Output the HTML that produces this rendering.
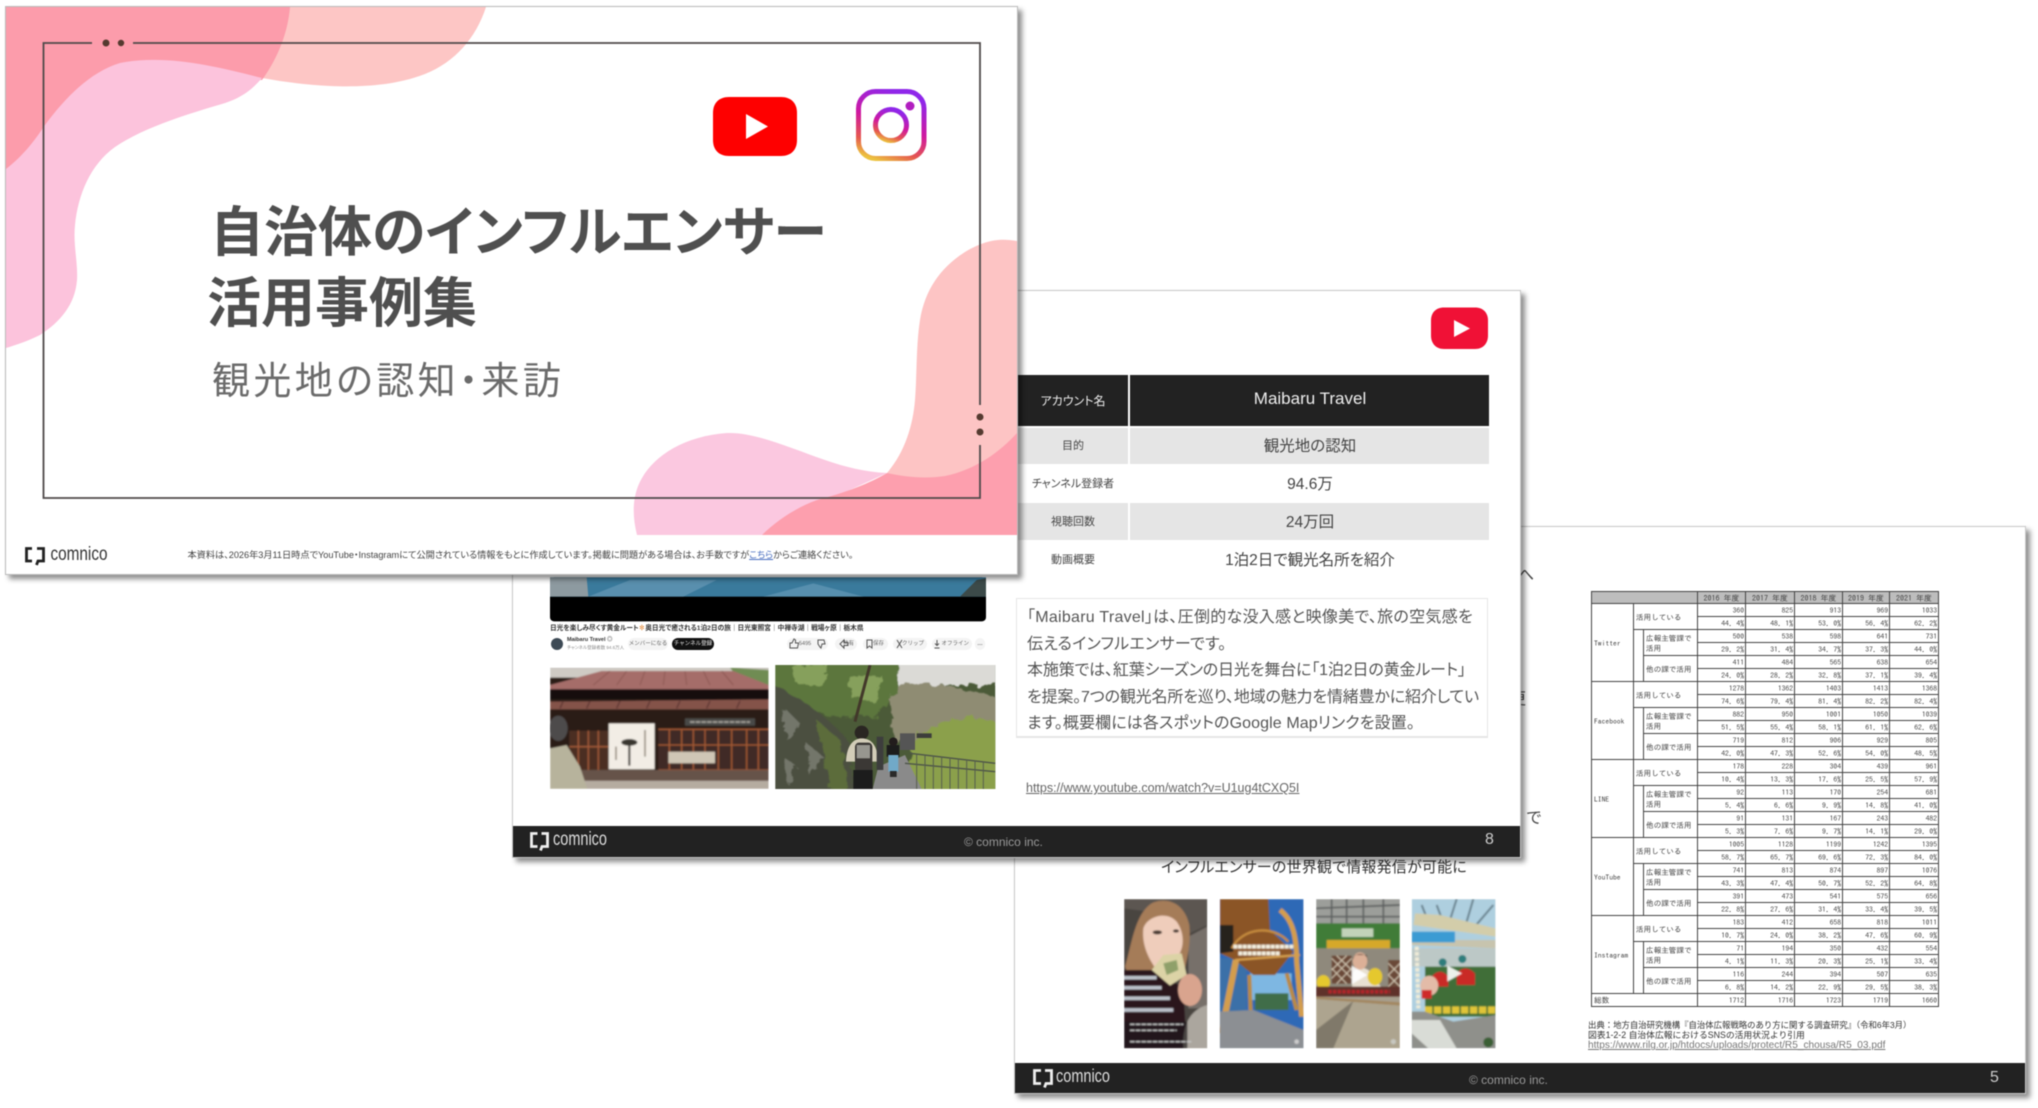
<!DOCTYPE html>
<html lang="ja"><head><meta charset="utf-8"><title>自治体のインフルエンサー活用事例集</title>
<style>
html,body{margin:0;padding:0;background:#fff}
body{position:relative;width:2038px;height:1108px;overflow:hidden;font-family:"Liberation Sans","Noto Sans CJK JP",sans-serif;color:#444}
#w{position:absolute;left:0;top:0;width:2038px;height:1108px;overflow:hidden;filter:blur(.4px)}
.a{position:absolute;white-space:nowrap}
.s{position:absolute;background:#fff;box-sizing:border-box;border:1px solid #c8c8c8;box-shadow:4px 4px 5px rgba(0,0,0,.45)}
.f{position:absolute;background:#222}
.p{font-feature-settings:"palt";}
svg{position:absolute;left:0;top:0}
table{position:absolute;left:1591px;top:591px;width:347px;border-collapse:collapse;table-layout:fixed;font-family:"IPAGothic","Liberation Mono",monospace;font-size:7.6px;color:#444}
td{border:1px solid #444;height:12px;padding:0 1px;text-align:right;line-height:10px;overflow:hidden;white-space:nowrap}
td.l{text-align:left;padding-left:2px}
td.g{background:#fff}
tr.h td{background:#bdbdbd;text-align:center;height:11px;font-size:8px}
.pl{position:absolute;top:638px;height:12px;background:#f4f4f4;border-radius:6px;font-size:5.5px;line-height:12px;text-align:center;color:#666;white-space:nowrap}
.lb{position:absolute;left:1020px;width:106px;text-align:center;font-size:11px;color:#444;white-space:nowrap}
.vl{position:absolute;left:1131px;width:358px;text-align:center;font-size:15.5px;color:#444;white-space:nowrap}
</style></head><body><div id="w">

<!-- Slide 3 -->
<div class="s" style="left:1014px;top:526px;width:1012px;height:568px"></div>
<div class="a" style="left:1518px;top:561px;font-size:16px;color:#444">へ</div>
<div class="a" style="left:1510px;top:685px;font-size:16px;color:#444">更</div>
<div class="a" style="left:1526px;top:804px;font-size:16px;color:#444">で</div>
<div class="a p" style="left:1161px;top:858px;font-size:15px;line-height:20px;color:#333;letter-spacing:.2px">インフルエンサーの世界観で情報発信が可能に</div>

<svg width="2038" height="1108" viewBox="0 0 2038 1108">
<defs>
<filter id="b1" x="-5%" y="-5%" width="110%" height="110%"><feGaussianBlur stdDeviation="2"/></filter>
<filter id="b3" x="-5%" y="-5%" width="110%" height="110%"><feGaussianBlur stdDeviation=".6"/></filter>
<filter id="org" x="-5%" y="-5%" width="110%" height="110%"><feTurbulence type="fractalNoise" baseFrequency=".035" numOctaves="3" seed="4"/><feDisplacementMap in="SourceGraphic" scale="34"/><feGaussianBlur stdDeviation="1.200"/></filter>
<clipPath id="t1"><rect x="12" y="12" width="250" height="448"/></clipPath>
<clipPath id="t2"><rect x="299" y="12" width="252" height="448"/></clipPath>
<clipPath id="t3"><rect x="588" y="12" width="252" height="448"/></clipPath>
<clipPath id="t4"><rect x="875" y="12" width="252" height="448"/></clipPath>
<clipPath id="p1"><rect x="60" y="293" width="656" height="364"/></clipPath>
<clipPath id="p2"><rect x="736" y="285" width="660" height="372"/></clipPath>
</defs>
<g transform="translate(1120 895) scale(.33333)">
<!-- thumb 1 -->
<g clip-path="url(#t1)"><g filter="url(#b1)">
<rect x="12" y="12" width="250" height="448" fill="#4a4441"/>
<path d="M12 12H262V90L200 120L160 60L12 40Z" fill="#5c5651"/>
<path d="M205 125L262 95V340H205Z" fill="#77706a"/>
<path d="M15 215C35 150 45 50 100 22C150 5 195 30 208 90C212 140 205 175 195 220L150 280H40Z" fill="#a57c58"/>
<path d="M70 100C80 65 140 45 170 80C195 115 195 165 165 195L110 225C85 190 65 150 70 100Z" fill="#efcdbb"/>
<ellipse cx="112" cy="112" rx="14" ry="6" fill="#4a3a32"/><ellipse cx="168" cy="108" rx="9" ry="5" fill="#4a3a32"/>
<path d="M12 225L110 225L190 280L200 460H12Z" fill="#2a161c"/>
<path d="M12 248H110M12 278H125M12 310H150M12 345H160" stroke="#bcc1ca" stroke-width="11"/>
<path d="M95 225L130 180L185 175L200 240L150 272Z" fill="#dcd3a6"/>
<path d="M130 205L170 195L175 225L140 240Z" fill="#8fa06a"/>
<ellipse cx="210" cy="285" rx="36" ry="48" fill="#d9a48e"/>
<path d="M190 460C185 400 205 345 262 330V460Z" fill="#aba69e"/>
<rect x="12" y="380" width="190" height="80" fill="#1f1b1c" opacity=".7"/>
<path d="M30 388H190M30 406H170M30 440H215" stroke="#c9c9c9" stroke-width="4" stroke-dasharray="14 3"/>
</g></g>
<!-- thumb 2 -->
<g clip-path="url(#t2)"><g filter="url(#b1)">
<rect x="299" y="12" width="252" height="448" fill="#2d69b6"/>
<rect x="390" y="235" width="125" height="80" fill="#7eb7e2"/>
<rect x="300" y="190" width="80" height="170" fill="#3a6fa8"/>
<path d="M300 12H445L450 105L520 170L465 240H400L345 195L300 175Z" fill="#8b5526"/>
<path d="M300 90H340V170L300 175Z" fill="#26211e"/>
<path d="M335 160C370 95 460 90 505 140" fill="none" stroke="#c58b3e" stroke-width="7"/>
<path d="M348 195L304 415" stroke="#d39d4e" stroke-width="19"/>
<path d="M480 45C520 75 530 130 530 200L545 365" fill="none" stroke="#d39d4e" stroke-width="15"/>
<path d="M388 240L392 355M500 235L530 345" stroke="#b98a44" stroke-width="12"/>
<path d="M345 195L540 180" stroke="#d39d4e" stroke-width="7"/>
<rect x="405" y="295" width="100" height="50" fill="#3f6d49"/>
<path d="M299 350L400 345L551 405V460H299Z" fill="#8c8f93"/>
<path d="M340 155H520M355 175H480" stroke="#f4f0e0" stroke-width="12" stroke-dasharray="12 2"/>
<circle cx="530" cy="440" r="7" fill="#ccc"/>
</g></g>
<!-- thumb 3 -->
<g clip-path="url(#t3)"><g filter="url(#b1)">
<rect x="588" y="12" width="252" height="448" fill="#a79f8e"/>
<rect x="588" y="12" width="252" height="75" fill="#9c9e9a"/>
<path d="M588 40L840 30M588 65H840M635 12V85M680 12V85M730 12V85M790 12V85" stroke="#5c5f5e" stroke-width="5"/>
<rect x="588" y="85" width="252" height="75" fill="#3f7b39"/>
<rect x="665" y="100" width="95" height="26" fill="#e4e8da" opacity=".8"/>
<rect x="620" y="135" width="190" height="44" fill="#d6a82c"/>
<rect x="588" y="160" width="252" height="130" fill="#8f897b"/>
<rect x="635" y="182" width="60" height="84" fill="#6a4837"/>
<path d="M635 190L695 250M650 182L695 225M635 220L680 266M695 190L635 250M680 182L635 225M695 220L650 266" stroke="#d9cdb8" stroke-width="3"/>
<rect x="805" y="195" width="35" height="90" fill="#6a4837"/>
<path d="M805 205L840 240M805 240L840 275M840 205L805 240M840 240L805 275" stroke="#d9cdb8" stroke-width="3"/>
<path d="M695 285L700 230Q720 210 745 225L790 285Z" fill="#e8e0d2"/>
<ellipse cx="720" cy="198" rx="22" ry="26" fill="#dcb097"/>
<path d="M698 195C700 170 745 170 745 200L740 180H705Z" fill="#53392c"/>
<ellipse cx="610" cy="262" rx="20" ry="22" fill="#e5c82e"/><ellipse cx="765" cy="245" rx="22" ry="26" fill="#e5c82e"/>
<rect x="588" y="275" width="252" height="30" fill="#5e3029"/>
<path d="M625 290H810" stroke="#b3252b" stroke-width="11" stroke-dasharray="10 4"/>
<path d="M588 305L840 322V332L588 312Z" fill="#a38761"/>
<path d="M588 312L840 332V460H588Z" fill="#ada48f"/>
<path d="M700 318L640 460H588V405Z" fill="#80796a"/>
<path d="M695 212L742 240L695 268Z" fill="#fff" opacity=".9"/>
<circle cx="820" cy="440" r="8" fill="#c8c8c0"/>
</g></g>
<!-- thumb 4 -->
<g clip-path="url(#t4)"><g filter="url(#b1)">
<rect x="875" y="12" width="252" height="448" fill="#aecfdf"/>
<path d="M1010 12L990 75M1060 12L1040 80M1120 30L1060 100M905 30L925 80M950 30L965 70" stroke="#67808c" stroke-width="6"/>
<path d="M885 55L960 60L1127 100V125L880 90Z" fill="#d3cdaa"/>
<path d="M875 135H1127V160L875 150Z" fill="#c7c4ae"/>
<rect x="875" y="110" width="130" height="32" fill="#3a9bd3"/>
<rect x="875" y="160" width="252" height="55" fill="#bcc8c6"/>
<rect x="915" y="215" width="212" height="150" fill="#3f6e39"/>
<path d="M935 245Q960 215 985 245L985 275H940Z" fill="#c92a25"/>
<path d="M1010 235Q1035 205 1065 235V270H1010Z" fill="#c92a25"/>
<circle cx="968" cy="202" r="12" fill="#2d7d7c"/><circle cx="1027" cy="192" r="12" fill="#2d7d7c"/>
<ellipse cx="928" cy="272" rx="27" ry="30" fill="#e3bba8"/>
<rect x="905" y="285" width="30" height="26" fill="#cf2b2a"/>
<path d="M890 155L895 340" stroke="#f0ecd8" stroke-width="12" stroke-dasharray="11 5"/>
<path d="M915 345H1125" stroke="#e0c437" stroke-width="22" stroke-dasharray="22 5"/>
<path d="M875 350H915L1000 380L1127 360V460H875Z" fill="#8f908b"/>
<path d="M875 375L960 375L1010 460H925L875 415Z" fill="#d9dcd6"/>
<circle cx="1105" cy="442" r="15" fill="#3b5f34"/>
<path d="M982 212L1026 235L982 260Z" fill="#fff" opacity=".9"/>
</g></g>
</g>

<!-- photos, in 3x local coordinates -->
<g transform="translate(530 570) scale(.33333)">
<rect x="60" y="22" width="1308" height="132" rx="12" fill="#000"/>
<rect x="60" y="22" width="1308" height="58" fill="#3a7a9c"/>
<path d="M60 22H170L175 80H60Z" fill="#8d9aa0"/>
<path d="M175 80L300 30H560L460 80Z" fill="#6699b6" opacity=".7"/>
<path d="M700 80L850 40L1000 80Z" fill="#74a4bf" opacity=".5"/>
<path d="M1290 80L1340 30L1368 25V80Z" fill="#3c4a49"/>
<path d="M60 22H120V40H60Z" fill="#2b2b2b"/>
<g clip-path="url(#p1)"><g filter="url(#b1)">
<rect x="60" y="293" width="656" height="364" fill="#2a1c18"/>
<rect x="60" y="293" width="656" height="30" fill="#cfcbc4"/>
<path d="M600 293L716 300V345H640Z" fill="#6f8c52"/>
<path d="M215 303H610L716 345V358H60V345Z" fill="#a56d69"/>
<path d="M190 345L240 303M260 345L290 303M330 345L345 303M400 345L405 303M470 345L465 303M540 345L520 303M610 345L575 303" stroke="#8d5853" stroke-width="3"/>
<rect x="60" y="358" width="656" height="30" fill="#171110"/>
<path d="M60 395L716 388V418H60Z" fill="#84524a"/>
<path d="M90 415L100 393M170 415L180 393M260 415L270 393M350 415L360 393M440 415L450 393M530 415L540 393M620 415L630 393" stroke="#5d3733" stroke-width="4"/>
<rect x="465" y="445" width="210" height="22" fill="#4a4946"/>
<path d="M480 456H660" stroke="#a5a29b" stroke-width="5" stroke-dasharray="14 3"/>
<rect x="118" y="482" width="118" height="118" fill="#4b2e23"/>
<path d="M145 482V600M175 482V600M205 482V600M118 530H236" stroke="#a55c3a" stroke-width="4"/>
<rect x="385" y="478" width="331" height="122" fill="#3f2c25"/>
<path d="M385 478H716M385 600H716M418 478V600M455 478V600M490 478V600M525 478V600M565 478V600M605 478V600M650 478V600M685 478V600M385 525H716" stroke="#a65a36" stroke-width="4" fill="none"/>
<rect x="415" y="545" width="140" height="35" fill="#cfc6b5"/>
<rect x="236" y="460" width="138" height="138" fill="#f2ede5"/>
<ellipse cx="298" cy="517" rx="24" ry="10" fill="#39342f"/>
<rect x="295" y="517" width="6" height="70" fill="#39342f"/>
<path d="M345 480V560M258 530V570" stroke="#7a6f62" stroke-width="4"/>
<rect x="60" y="600" width="656" height="32" fill="#66534a"/>
<rect x="60" y="632" width="656" height="25" fill="#b5aca0"/>
<ellipse cx="85" cy="475" rx="28" ry="38" fill="#4d4b4b"/>
<path d="M60 535L110 525L150 590L172 657H60Z" fill="#b7b39c"/>
</g></g>
<g clip-path="url(#p2)">
<rect x="736" y="285" width="660" height="372" fill="#4b5a38"/>
<g filter="url(#org)">
<path d="M1060 270H1410V345H1060Z" fill="#dbdad6"/>
<path d="M1075 350Q1200 320 1410 385V510H1090Z" fill="#8f8c73"/>
<path d="M1140 515Q1280 400 1410 465V670H1140Z" fill="#8ba04c"/>
<path d="M720 270H1100C1110 330 1100 390 1030 440H900L720 360Z" fill="#5c763c"/>
<path d="M780 285H900L870 350L800 340ZM960 320H1060L1040 400L960 380Z" fill="#86a05c"/>
<path d="M720 340C790 370 900 440 960 520L975 670H720Z" fill="#4b5041"/>
<path d="M760 410L810 460L770 510ZM830 520L880 560L840 620ZM760 560L800 590L770 640Z" fill="#73766a"/>
<path d="M860 450L930 510L960 660L900 660Z" fill="#5b6c3a"/>
</g>
<g filter="url(#b3)">
<path d="M1020 285L975 455" stroke="#423929" stroke-width="9"/>
<path d="M1028 657L1045 590L1125 555L1175 657Z" fill="#8a8a8a"/>
<path d="M1140 550L1396 580M1125 580L1396 605" stroke="#4e5448" stroke-width="4"/>
<path d="M1160 552V657M1185 555V657M1210 558V657M1235 560V657M1260 563V657M1285 566V657M1310 569V657M1335 572V657M1360 575V657" stroke="#565d4e" stroke-width="3"/>
<circle cx="995" cy="488" r="21" fill="#2a2522"/>
<path d="M948 575C950 520 975 505 995 505C1020 505 1042 520 1045 575Z" fill="#d3cdb8"/>
<rect x="975" y="518" width="52" height="90" rx="12" fill="#3a3836"/>
<rect x="980" y="525" width="40" height="40" fill="#97968f"/>
<rect x="970" y="600" width="58" height="57" fill="#1f1e1d"/>
<rect x="1070" y="525" width="38" height="35" fill="#1e1d1e"/>
<circle cx="1090" cy="515" r="13" fill="#241f1d"/>
<rect x="1075" y="555" width="30" height="50" fill="#71a9c8"/>
<rect x="1080" y="603" width="20" height="18" fill="#2a2a2a"/>
<rect x="1040" y="500" width="20" height="100" fill="#3c3c3c"/>
<rect x="1110" y="490" width="45" height="50" fill="#555"/>
<path d="M1160 490h45v14h-45z" fill="#3c3c3a"/>
</g>
</g>
</g>
</svg>

<!-- Table -->
<table>
<col style="width:42px"><col style="width:10px"><col style="width:54px"><col style="width:48px"><col style="width:49px"><col style="width:48px"><col style="width:47px"><col style="width:49px">
<tr class="h"><td colspan="3"><td>2016 年度<td>2017 年度<td>2018 年度<td>2019 年度<td>2021 年度
<tr><td class="l" rowspan="6">Twitter<td class="l" colspan="2" rowspan="2">活用している<td>360<td>825<td>913<td>969<td>1033
<tr><td>44. 4%<td>48. 1%<td>53. 0%<td>56. 4%<td>62. 2%
<tr><td class="g" rowspan="4"><td class="l" rowspan="2">広報主管課で<br>活用<td>500<td>538<td>598<td>641<td>731
<tr><td>29. 2%<td>31. 4%<td>34. 7%<td>37. 3%<td>44. 0%
<tr><td class="l" rowspan="2">他の課で活用<td>411<td>484<td>565<td>638<td>654
<tr><td>24. 0%<td>28. 2%<td>32. 8%<td>37. 1%<td>39. 4%
<tr><td class="l" rowspan="6">Facebook<td class="l" colspan="2" rowspan="2">活用している<td>1278<td>1362<td>1403<td>1413<td>1368
<tr><td>74. 6%<td>79. 4%<td>81. 4%<td>82. 2%<td>82. 4%
<tr><td class="g" rowspan="4"><td class="l" rowspan="2">広報主管課で<br>活用<td>882<td>950<td>1001<td>1050<td>1039
<tr><td>51. 5%<td>55. 4%<td>58. 1%<td>61. 1%<td>62. 6%
<tr><td class="l" rowspan="2">他の課で活用<td>719<td>812<td>906<td>929<td>805
<tr><td>42. 0%<td>47. 3%<td>52. 6%<td>54. 0%<td>48. 5%
<tr><td class="l" rowspan="6">LINE<td class="l" colspan="2" rowspan="2">活用している<td>178<td>228<td>304<td>439<td>961
<tr><td>10. 4%<td>13. 3%<td>17. 6%<td>25. 5%<td>57. 9%
<tr><td class="g" rowspan="4"><td class="l" rowspan="2">広報主管課で<br>活用<td>92<td>113<td>170<td>254<td>681
<tr><td>5. 4%<td>6. 6%<td>9. 9%<td>14. 8%<td>41. 0%
<tr><td class="l" rowspan="2">他の課で活用<td>91<td>131<td>167<td>243<td>482
<tr><td>5. 3%<td>7. 6%<td>9. 7%<td>14. 1%<td>29. 0%
<tr><td class="l" rowspan="6">YouTube<td class="l" colspan="2" rowspan="2">活用している<td>1005<td>1128<td>1199<td>1242<td>1395
<tr><td>58. 7%<td>65. 7%<td>69. 6%<td>72. 3%<td>84. 0%
<tr><td class="g" rowspan="4"><td class="l" rowspan="2">広報主管課で<br>活用<td>741<td>813<td>874<td>897<td>1076
<tr><td>43. 3%<td>47. 4%<td>50. 7%<td>52. 2%<td>64. 8%
<tr><td class="l" rowspan="2">他の課で活用<td>391<td>473<td>541<td>575<td>656
<tr><td>22. 8%<td>27. 6%<td>31. 4%<td>33. 4%<td>39. 5%
<tr><td class="l" rowspan="6">Instagram<td class="l" colspan="2" rowspan="2">活用している<td>183<td>412<td>658<td>818<td>1011
<tr><td>10. 7%<td>24. 0%<td>38. 2%<td>47. 6%<td>60. 9%
<tr><td class="g" rowspan="4"><td class="l" rowspan="2">広報主管課で<br>活用<td>71<td>194<td>350<td>432<td>554
<tr><td>4. 1%<td>11. 3%<td>20. 3%<td>25. 1%<td>33. 4%
<tr><td class="l" rowspan="2">他の課で活用<td>116<td>244<td>394<td>507<td>635
<tr><td>6. 8%<td>14. 2%<td>22. 9%<td>29. 5%<td>38. 3%
<tr><td class="l" colspan="3">総数<td>1712<td>1716<td>1723<td>1719<td>1660
</table>

<div class="a" style="left:1588px;top:1020px;font-size:8.400px;line-height:10px;color:#333">出典：地方自治研究機構『自治体広報戦略のあり方に関する調査研究』（令和6年3月）<br><span style="font-size:8.800px">図表1-2-2 自治体広報におけるSNSの活用状況より引用</span><br><span style="color:#777;text-decoration:underline;font-size:10.100px">https://www.rilg.or.jp/htdocs/uploads/protect/R5_chousa/R5_03.pdf</span></div>

<div class="f" style="left:1015px;top:1063px;width:1010px;height:30px"></div>
<svg width="2038" height="1108" viewBox="0 0 2038 1108" fill="none">
<path d="M1041 1070.500H1034.500V1083.500H1041M1045 1070.500H1051.500V1083.500H1046L1044.500 1087.500" stroke="#eee" stroke-width="2.800"/>
<text x="1056" y="1082" font-family="Liberation Sans" font-size="18" fill="#ddd" textLength="54" lengthAdjust="spacingAndGlyphs">comnico</text>
</svg>
<div class="a" style="left:1469px;top:1073px;font-size:12px;line-height:14px;color:#999">© comnico inc.</div>
<div class="a" style="left:1990px;top:1069px;font-size:16px;line-height:18px;color:#ccc">5</div>

<!-- Slide 2 -->
<div class="s" style="left:512px;top:290px;width:1009px;height:568px"></div>

<svg width="2038" height="1108" viewBox="0 0 2038 1108">
<path d="M1444 307.500h31c8 0 13 5 13 13v15c0 8-5 13.500-13 13.500h-31c-8 0-13-5.500-13-13.500v-15c0-8 5-13 13-13z" fill="#f01136"/>
<path d="M1454 320L1470 328.500L1454 337Z" fill="#fff"/>
</svg>

<svg width="2038" height="1108" viewBox="0 0 2038 1108">
<g transform="translate(530 570) scale(.33333)">
<rect x="60" y="22" width="1308" height="132" rx="12" fill="#000"/>
<rect x="60" y="22" width="1308" height="58" fill="#3a7a9c"/>
<path d="M60 22H170L175 80H60Z" fill="#8d9aa0"/>
<path d="M175 80L300 30H560L460 80Z" fill="#6699b6" opacity=".7"/>
<path d="M700 80L850 40L1000 80Z" fill="#74a4bf" opacity=".5"/>
<path d="M1290 80L1340 30L1368 25V80Z" fill="#3c4a49"/>
<g clip-path="url(#p1)"><g filter="url(#b1)">
<rect x="60" y="293" width="656" height="364" fill="#2a1c18"/>
<rect x="60" y="293" width="656" height="30" fill="#cfcbc4"/>
<path d="M600 293L716 300V345H640Z" fill="#6f8c52"/>
<path d="M215 303H610L716 345V358H60V345Z" fill="#a56d69"/>
<path d="M190 345L240 303M260 345L290 303M330 345L345 303M400 345L405 303M470 345L465 303M540 345L520 303M610 345L575 303" stroke="#8d5853" stroke-width="3"/>
<rect x="60" y="358" width="656" height="30" fill="#171110"/>
<path d="M60 395L716 388V418H60Z" fill="#84524a"/>
<path d="M90 415L100 393M170 415L180 393M260 415L270 393M350 415L360 393M440 415L450 393M530 415L540 393M620 415L630 393" stroke="#5d3733" stroke-width="4"/>
<rect x="465" y="445" width="210" height="22" fill="#4a4946"/>
<path d="M480 456H660" stroke="#a5a29b" stroke-width="5" stroke-dasharray="14 3"/>
<rect x="118" y="482" width="118" height="118" fill="#4b2e23"/>
<path d="M145 482V600M175 482V600M205 482V600M118 530H236" stroke="#a55c3a" stroke-width="4"/>
<rect x="385" y="478" width="331" height="122" fill="#3f2c25"/>
<path d="M385 478H716M385 600H716M418 478V600M455 478V600M490 478V600M525 478V600M565 478V600M605 478V600M650 478V600M685 478V600M385 525H716" stroke="#a65a36" stroke-width="4" fill="none"/>
<rect x="415" y="545" width="140" height="35" fill="#cfc6b5"/>
<rect x="236" y="460" width="138" height="138" fill="#f2ede5"/>
<ellipse cx="298" cy="517" rx="24" ry="10" fill="#39342f"/>
<rect x="295" y="517" width="6" height="70" fill="#39342f"/>
<path d="M345 480V560M258 530V570" stroke="#7a6f62" stroke-width="4"/>
<rect x="60" y="600" width="656" height="32" fill="#66534a"/>
<rect x="60" y="632" width="656" height="25" fill="#b5aca0"/>
<ellipse cx="85" cy="475" rx="28" ry="38" fill="#4d4b4b"/>
<path d="M60 535L110 525L150 590L172 657H60Z" fill="#b7b39c"/>
</g></g>
<g clip-path="url(#p2)">
<rect x="736" y="285" width="660" height="372" fill="#4b5a38"/>
<g filter="url(#org)">
<path d="M1060 270H1410V345H1060Z" fill="#dbdad6"/>
<path d="M1075 350Q1200 320 1410 385V510H1090Z" fill="#8f8c73"/>
<path d="M1140 515Q1280 400 1410 465V670H1140Z" fill="#8ba04c"/>
<path d="M720 270H1100C1110 330 1100 390 1030 440H900L720 360Z" fill="#5c763c"/>
<path d="M780 285H900L870 350L800 340ZM960 320H1060L1040 400L960 380Z" fill="#86a05c"/>
<path d="M720 340C790 370 900 440 960 520L975 670H720Z" fill="#4b5041"/>
<path d="M760 410L810 460L770 510ZM830 520L880 560L840 620ZM760 560L800 590L770 640Z" fill="#73766a"/>
<path d="M860 450L930 510L960 660L900 660Z" fill="#5b6c3a"/>
</g>
<g filter="url(#b3)">
<path d="M1020 285L975 455" stroke="#423929" stroke-width="9"/>
<path d="M1028 657L1045 590L1125 555L1175 657Z" fill="#8a8a8a"/>
<path d="M1140 550L1396 580M1125 580L1396 605" stroke="#4e5448" stroke-width="4"/>
<path d="M1160 552V657M1185 555V657M1210 558V657M1235 560V657M1260 563V657M1285 566V657M1310 569V657M1335 572V657M1360 575V657" stroke="#565d4e" stroke-width="3"/>
<circle cx="995" cy="488" r="21" fill="#2a2522"/>
<path d="M948 575C950 520 975 505 995 505C1020 505 1042 520 1045 575Z" fill="#d3cdb8"/>
<rect x="975" y="518" width="52" height="90" rx="12" fill="#3a3836"/>
<rect x="980" y="525" width="40" height="40" fill="#97968f"/>
<rect x="970" y="600" width="58" height="57" fill="#1f1e1d"/>
<rect x="1070" y="525" width="38" height="35" fill="#1e1d1e"/>
<circle cx="1090" cy="515" r="13" fill="#241f1d"/>
<rect x="1075" y="555" width="30" height="50" fill="#71a9c8"/>
<rect x="1080" y="603" width="20" height="18" fill="#2a2a2a"/>
<rect x="1040" y="500" width="20" height="100" fill="#3c3c3c"/>
<rect x="1110" y="490" width="45" height="50" fill="#555"/>
<path d="M1160 490h45v14h-45z" fill="#3c3c3a"/>
</g>
</g>
</g>
</svg>

<div class="a p" style="left:550px;top:623px;font-size:6.700px;line-height:12px;font-weight:700;color:#333">日光を楽しみ尽くす黄金ルート<span style="color:#e07a1f">✽</span>奥日光で癒される1泊2日の旅｜日光東照宮｜中禅寺湖｜戦場ヶ原｜栃木県</div>
<div class="a" style="left:551px;top:638px;width:12px;height:12px;border-radius:50%;background:#3d4a55"></div>
<div class="a" style="left:567px;top:636px;font-size:5.500px;line-height:8px;font-weight:700;color:#333">Maibaru Travel ◎</div>
<div class="a p" style="left:567px;top:644px;font-size:4.500px;line-height:7px;color:#888">チャンネル登録者数 94.6万人</div>
<div class="pl" style="left:628px;width:40px">メンバーになる</div>
<div class="pl" style="left:672px;width:42px;background:#111;color:#eee">チャンネル登録</div>
<div class="pl" style="left:787px;width:41px;text-align:left;padding-left:0"><span style="margin-left:12px">5495</span></div>
<div class="pl" style="left:835px;width:22px;text-align:right"><span style="margin-right:3px">共有</span></div>
<div class="pl" style="left:863px;width:25px;text-align:right"><span style="margin-right:4px">保存</span></div>
<div class="pl" style="left:893px;width:34px;text-align:right"><span style="margin-right:3px">クリップ</span></div>
<div class="pl" style="left:932px;width:40px;text-align:right"><span style="margin-right:3px">オフライン</span></div>
<div class="pl" style="left:975px;width:10px;font-weight:700">…</div>
<svg width="2038" height="1108" viewBox="0 0 2038 1108" fill="none" stroke="#555" stroke-width="1">
<path d="M790 648V643H792L794 639L795.500 640V643H798.500L797.500 648Z"/>
<path d="M818 640H824L825 644H822L821 648L820 647L818 644Z"/>
<path d="M840 644L844 640V642.500H848V645.500H844V648Z"/>
<path d="M867 640H872V648L869.500 646L867 648Z"/>
<path d="M897 640L902 648M902 640L897 648"/>
<path d="M937 640V645M935 643.500L937 645.500L939 643.500M934.500 648H939.500"/>
</svg>

<!-- Slide 2 table -->
<div class="a" style="left:1000px;top:375px;width:489px;height:51px;background:#222"></div>
<div class="a" style="left:1000px;top:428px;width:489px;height:36px;background:#e5e5e5"></div>
<div class="a" style="left:1000px;top:503px;width:489px;height:37px;background:#e5e5e5"></div>
<div class="a" style="left:1128px;top:375px;width:2px;height:204px;background:#fff"></div>
<div class="lb p" style="top:392px;color:#eee;font-size:12px">アカウント名</div>
<div class="lb p" style="top:437px">目的</div>
<div class="lb p" style="top:475px">チャンネル登録者</div>
<div class="lb p" style="top:513px">視聴回数</div>
<div class="lb p" style="top:551px">動画概要</div>
<div class="vl" style="top:389px;color:#eee;font-size:17px">Maibaru Travel</div>
<div class="vl p" style="top:434px">観光地の認知</div>
<div class="vl p" style="top:472px">94.6万</div>
<div class="vl p" style="top:510px">24万回</div>
<div class="vl p" style="top:548px">1泊2日で観光名所を紹介</div>

<div class="a" style="left:1016px;top:598px;width:472px;height:140px;box-sizing:border-box;border:1px solid #e6e6e6;border-bottom:2px solid #e6e6e6"></div>
<div class="a p" style="left:1027px;top:605px;font-size:16px;line-height:26.600px;color:#555;white-space:nowrap"><span style="letter-spacing:.27px">「Maibaru Travel」は、圧倒的な没入感と映像美で、旅の空気感を</span><br><span style="letter-spacing:.28px">伝えるインフルエンサーです。</span><br><span style="letter-spacing:-.15px">本施策では、紅葉シーズンの日光を舞台に「1泊2日の黄金ルート」</span><br><span style="letter-spacing:-.18px">を提案。7つの観光名所を巡り、地域の魅力を情緒豊かに紹介してい</span><br><span style="letter-spacing:.1px">ます。概要欄には各スポットのGoogle Mapリンクを設置。</span></div>
<div class="a" style="left:1026px;top:781px;font-size:12.500px;line-height:15px;color:#666;text-decoration:underline">https://www.youtube.com/watch?v=U1ug4tCXQ5I</div>

<div class="f" style="left:513px;top:826px;width:1007px;height:31px"></div>
<svg width="2038" height="1108" viewBox="0 0 2038 1108" fill="none">
<path d="M537.500 833.500H531.500V846.500H537.500M541.500 833.500H547.500V846.500H542L540.500 850.500" stroke="#eee" stroke-width="2.800"/>
<text x="553" y="845" font-family="Liberation Sans" font-size="19" fill="#ddd" textLength="54" lengthAdjust="spacingAndGlyphs">comnico</text>
</svg>
<div class="a" style="left:964px;top:835px;font-size:12px;line-height:15px;color:#999">© comnico inc.</div>
<div class="a" style="left:1485px;top:831px;font-size:16px;line-height:18px;color:#ccc">8</div>

<!-- Slide 1 -->
<div class="s" style="left:5px;top:6px;width:1013px;height:569px;border-color:#bbb"></div>
<svg width="2038" height="1108" viewBox="0 0 2038 1108">
<!-- top-left blobs -->
<path d="M6 7H486C476 38 455 62 425 74C392 87 340 92 262 78L200 60L6 170Z" fill="#fdc6c5"/>
<path d="M6 7H290C288 32 278 58 262 80L180 72L6 172Z" fill="#fc9cab"/>
<path d="M6 169C24 155 35 140 45 125C65 98 90 72 120 63C165 54 215 66 262 78C250 92 238 100 215 106C175 118 140 130 115 147C90 165 78 195 75 225C73 245 78 262 77 280C75 305 60 322 40 335C28 341 16 345 6 348Z" fill="#fcc3dc"/>
<!-- bottom right blobs -->
<path d="M1017 241C1000 238 985 240 965 252C940 268 925 290 920 320C916 345 917 375 915 400C913 425 905 452 887 473L925 495H1017Z" fill="#fdc4c4"/>
<path d="M637 535C632 515 632 495 642 478C655 455 685 436 727 433C755 432 790 448 825 460C845 467 865 472 887 473L817 505L762 535Z" fill="#fbc8e0"/>
<path d="M1017 433C1000 452 975 470 945 476C925 479 905 477 887 473C870 483 845 493 817 500C795 508 775 522 762 535H1017Z" fill="#fd9fae"/>
<!-- frame -->
<path d="M92 43H43.500V498H980V445M980 405V43H133" fill="none" stroke="#4f4a4a" stroke-width="1.800"/>
<circle cx="106" cy="43" r="3.500" fill="#553a30"/><circle cx="121" cy="43" r="3.200" fill="#553a30"/>
<circle cx="980" cy="417" r="3.500" fill="#553a30"/><circle cx="980" cy="432" r="3.500" fill="#553a30"/>
<!-- YouTube -->
<path d="M729 97H781C791 97 797 103 797 113V140C797 150 791 156 781 156H729C719 156 713 150 713 140V113C713 103 719 97 729 97Z" fill="#fe0000"/>
<path d="M746 114L768 126.500L746 139Z" fill="#fff"/>
<!-- Instagram -->
<defs><linearGradient id="ig" x1=".2" y1="1" x2=".55" y2="0">
<stop offset="0" stop-color="#ecc33f"/><stop offset=".22" stop-color="#e5584f"/><stop offset=".55" stop-color="#cf18a0"/><stop offset="1" stop-color="#8f27ea"/></linearGradient></defs>
<rect x="858.500" y="91.500" width="65.500" height="67" rx="17" fill="none" stroke="url(#ig)" stroke-width="5"/>
<circle cx="891" cy="125" r="15.500" fill="none" stroke="url(#ig)" stroke-width="5"/>
<circle cx="910" cy="106" r="4.500" fill="#b11ec0"/>
<!-- comnico logo -->
<path d="M32 548.500H26.500V561H32M37 548.500H43.500V561H38L36.500 565" fill="none" stroke="#222" stroke-width="2.800"/>
<text x="50.500" y="560" font-family="Liberation Sans" font-size="19" fill="#333" textLength="57" lengthAdjust="spacingAndGlyphs">comnico</text>
</svg>
<div class="a p" style="left:210px;top:198px;font-size:54px;line-height:71px;font-weight:700;color:#4f4f4f">自治体のインフルエンサー</div>
<div class="a p" style="left:207px;top:269px;font-size:54px;line-height:71px;font-weight:700;color:#4f4f4f">活用事例集</div>
<div class="a" style="left:212px;top:356px;font-size:38px;line-height:52px;color:#6b6b6b;font-feature-settings:'palt';letter-spacing:3.400px">観光地の認知・来訪</div>
<div class="a p" style="left:187.500px;top:549px;font-size:9.200px;line-height:12px;color:#444;letter-spacing:-.02px">本資料は、2026年3月11日時点でYouTube・Instagramにて公開されている情報をもとに作成しています。掲載に問題がある場合は、お手数ですが<span style="color:#4a6fc0;text-decoration:underline">こちら</span>からご連絡ください。</div>

</div></body></html>
